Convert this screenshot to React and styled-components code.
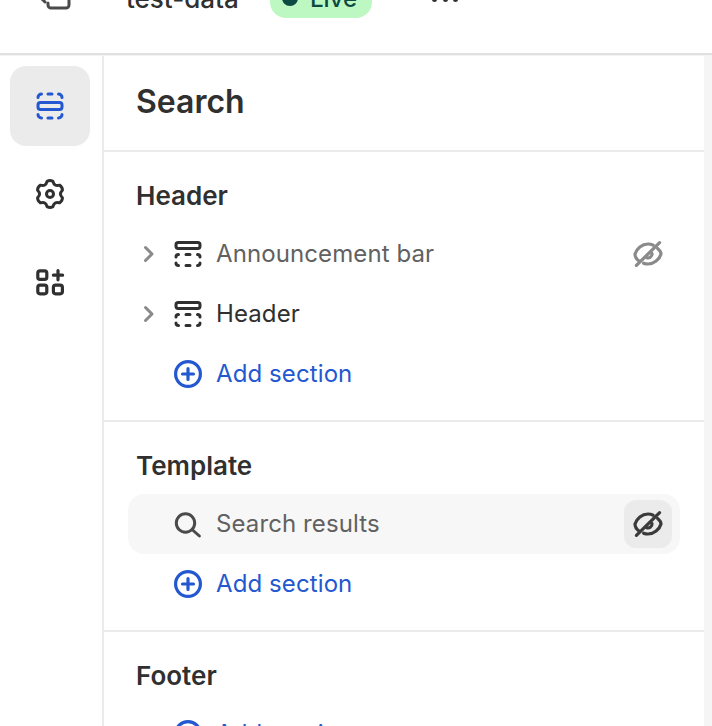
import React from "react";
import styled, { createGlobalStyle } from "styled-components";

const Global = createGlobalStyle`
  html, body { margin: 0; padding: 0; background: #fff; }
  body { font-family: Inter, "Liberation Sans", sans-serif; color: #303030; overflow: hidden; }
  * { box-sizing: border-box; }
`;

const Page = styled.div`
  width: 712px;
  height: 726px;
  overflow: hidden;
  display: flex;
  flex-direction: column;
  background: #fff;
`;

const TopBar = styled.header`
  flex: none;
  height: 55px;
  margin-bottom: 1px;
  display: flex;
  align-items: flex-start;
  overflow: hidden;
  border-bottom: 2px solid #e0e0e0;
  box-shadow: 0 1px 0 #f3f3f3;
  background: #fff;
`;

const TopInner = styled.div`
  display: flex;
  align-items: center;
  height: 40px;
  margin-top: -22px;
  padding-left: 38px;
`;

const ProjectName = styled.span`
  margin-left: 52px;
  width: 112px;
  font-size: 26px;
  font-weight: 450;
  white-space: nowrap;
  color: #303030;
`;

const LiveBadge = styled.span`
  margin-left: 32px;
  height: 40px;
  width: 102px;
  padding: 0 0 0 12px;
  display: flex;
  align-items: center;
  gap: 12px;
  border-radius: 16px;
  background: #bdf8c2;
  color: #0c4a42;
  font-size: 24px;
  font-weight: 450;
`;

const LiveDot = styled.i`
  flex: none;
  width: 16px;
  height: 16px;
  border-radius: 50%;
  background: #0c4a42;
`;

const MoreDots = styled.span`
  margin-left: 60px;
  margin-top: 2px;
  display: flex;
  gap: 5.5px;
`;

const MoreDot = styled.i`
  width: 5px;
  height: 5px;
  border-radius: 50%;
  background: #303030;
`;

const Body = styled.div`
  flex: 1;
  min-height: 0;
  display: flex;
`;

const Rail = styled.nav`
  flex: none;
  width: 104px;
  padding: 10px 12px 0 10px;
  display: flex;
  flex-direction: column;
  gap: 8px;
  border-right: 2px solid #ebebeb;
`;

const RailButton = styled.button`
  width: 80px;
  height: 80px;
  padding: 0;
  border: 0;
  border-radius: 16px;
  display: flex;
  align-items: center;
  justify-content: center;
  background: ${(p) => (p.$active ? "#ebebeb" : "transparent")};
  color: ${(p) => (p.$active ? "#2358d1" : "#303030")};
`;

const Panel = styled.main`
  flex: none;
  width: 600px;
  min-height: 0;
  overflow: hidden;
`;

const Gutter = styled.div`
  flex: 1;
  background: #f5f5f5;
`;

const TitleBlock = styled.div`
  height: 96px;
  padding: 0 32px;
  display: flex;
  align-items: flex-start;
  border-bottom: 2px solid #ebebeb;
`;

const Title = styled.h1`
  margin: 0;
  font-size: 32px;
  font-weight: 600;
  color: #303030;
  line-height: 91px;
`;

const Section = styled.section`
  padding: 20px 24px 16px;
  border-bottom: 2px solid #ebebeb;
`;

const SectionTitle = styled.h2`
  margin: 0 0 4px 8px;
  height: 48px;
  line-height: 48px;
  font-size: 26px;
  font-weight: 600;
  color: #303030;
`;

const Row = styled.div`
  height: 60px;
  width: 552px;
  display: flex;
  align-items: center;
  border-radius: 16px;
  background: ${(p) => (p.$selected ? "#f7f7f7" : "transparent")};
`;

const Chevron = styled.span`
  flex: none;
  width: 40px;
  display: flex;
  justify-content: center;
  color: #8a8a8a;
`;

const RowIcon = styled.span`
  flex: none;
  width: 40px;
  height: 40px;
  margin-left: ${(p) => (p.$indent ? "40px" : "0")};
  display: flex;
  color: ${(p) => p.$color || "#303030"};
`;

const RowLabel = styled.span`
  flex: 1;
  margin-left: 8px;
  padding-bottom: 2px;
  font-size: 24px;
  font-weight: 400;
  letter-spacing: 0.1px;
  color: ${(p) => (p.$muted ? "#616161" : p.$link ? "#2358d1" : "#303030")};
`;

const EyeButton = styled.span`
  flex: none;
  width: 48px;
  height: 48px;
  margin-right: 8px;
  border-radius: 12px;
  display: flex;
  align-items: center;
  justify-content: center;
  background: ${(p) => (p.$active ? "#ebebeb" : "transparent")};
  color: ${(p) => (p.$active ? "#3a3a3a" : "#8a8a8a")};
`;

const Svg = ({ children, sw = 1.5 }) => (
  <svg width="40" height="40" viewBox="0 0 20 20" fill="none" stroke="currentColor" strokeWidth={sw} strokeLinecap="round" strokeLinejoin="round">
    {children}
  </svg>
);

const LayoutIcon = () => (
  <Svg>
    <rect x="4" y="8.25" width="12" height="3.5" rx="1.25" />
    <path d="M4 5.75A1.75 1.75 0 0 1 5.75 4M16 5.75A1.75 1.75 0 0 0 14.25 4M9 4h2" />
    <path d="M4 14.25A1.75 1.75 0 0 0 5.75 16M16 14.25A1.75 1.75 0 0 1 14.25 16M9 16h2" />
  </Svg>
);

const polar = (deg, r) => {
  const a = (deg * Math.PI) / 180;
  return `${(10 + r * Math.cos(a)).toFixed(2)} ${(10 + r * Math.sin(a)).toFixed(2)}`;
};

const gearPath = () => {
  let d = `M${polar(-120, 5.2)}`;
  for (let i = 0; i < 6; i += 1) {
    const t = -90 + i * 60;
    d += `Q${polar(t - 20, 5.3)} ${polar(t - 13, 6.5)}`;
    d += `Q${polar(t, 7.15)} ${polar(t + 13, 6.5)}`;
    d += `Q${polar(t + 20, 5.3)} ${polar(t + 30, 5.2)}`;
  }
  return `${d}Z`;
};

const GearIcon = () => (
  <Svg>
    <circle cx="10" cy="10" r="1.75" />
    <path d={gearPath()} />
  </Svg>
);

const AppsIcon = () => (
  <Svg sw={1.6}>
    <rect x="3.9" y="4.4" width="4.5" height="4.3" rx="1.1" />
    <rect x="3.9" y="11.6" width="4.5" height="4.3" rx="1.1" />
    <rect x="11.7" y="11.6" width="4.5" height="4.3" rx="1.1" />
    <path d="M14 4.3v4.6M11.7 6.6h4.6" />
  </Svg>
);

const ChevronIcon = () => (
  <Svg>
    <path d="M8.75 6.75l3.25 3.25-3.25 3.25" />
  </Svg>
);

const HeaderBlockIcon = () => (
  <Svg>
    <rect x="4" y="4.25" width="12" height="3" rx="1.1" />
    <path d="M4 11.5A1.25 1.25 0 0 1 5.25 10.25M16 11.5A1.25 1.25 0 0 0 14.75 10.25M9 10.25h2" />
    <path d="M4 14.5A1.25 1.25 0 0 0 5.25 15.75M16 14.5A1.25 1.25 0 0 1 14.75 15.75M9 15.75h2" />
  </Svg>
);

const PlusCircleIcon = () => (
  <Svg sw={1.6}>
    <circle cx="10" cy="10" r="6.2" />
    <path d="M10 7.25v5.5M7.25 10h5.5" />
  </Svg>
);

const SearchIcon = () => (
  <Svg>
    <circle cx="8.75" cy="9.5" r="4.6" />
    <path d="M12.3 13l3.4 3" />
  </Svg>
);

const EyeOffIcon = () => (
  <Svg sw={1.6}>
    <path d="M5.5 13.5C4.2 12.6 3.5 11.2 3.5 10C4.3 7.2 7 5 10 5C11 5 11.8 5.2 12.6 5.6" />
    <path d="M14.8 7.2C15.8 8 16.5 9 16.5 10C15.7 12.8 13 15 10 15C9.2 15 8.5 14.9 7.8 14.6" />
    <path d="M12 9.8A2 2 0 0 1 9.2 11.8" />
    <path d="M4.2 15.7L15.8 4.3" />
  </Svg>
);

const AddRow = () => (
  <Row>
    <RowIcon $indent $color="#2358d1"><PlusCircleIcon /></RowIcon>
    <RowLabel $link>Add section</RowLabel>
  </Row>
);

export default function App() {
  return (
    <Page>
      <Global />
      <TopBar>
        <TopInner>
          <svg width="36" height="40" viewBox="0 0 18 20" fill="none" stroke="#4a4a4a" strokeWidth="1.5" strokeLinecap="round">
            <path d="M2 10.5l1.5 1.5M5 12.5v1a1.5 1.5 0 0 0 1.5 1.5h7.5a1.5 1.5 0 0 0 1.5-1.5V7" />
          </svg>
          <ProjectName>test-data</ProjectName>
          <LiveBadge><LiveDot />Live</LiveBadge>
          <MoreDots><MoreDot /><MoreDot /><MoreDot /></MoreDots>
        </TopInner>
      </TopBar>
      <Body>
        <Rail>
          <RailButton $active><LayoutIcon /></RailButton>
          <RailButton><GearIcon /></RailButton>
          <RailButton><AppsIcon /></RailButton>
        </Rail>
        <Panel>
          <TitleBlock><Title>Search</Title></TitleBlock>
          <Section>
            <SectionTitle>Header</SectionTitle>
            <Row>
              <Chevron><ChevronIcon /></Chevron>
              <RowIcon><HeaderBlockIcon /></RowIcon>
              <RowLabel $muted>Announcement bar</RowLabel>
              <EyeButton><EyeOffIcon /></EyeButton>
            </Row>
            <Row>
              <Chevron><ChevronIcon /></Chevron>
              <RowIcon><HeaderBlockIcon /></RowIcon>
              <RowLabel>Header</RowLabel>
            </Row>
            <AddRow />
          </Section>
          <Section>
            <SectionTitle>Template</SectionTitle>
            <Row $selected>
              <RowIcon $indent $color="#4a4a4a"><SearchIcon /></RowIcon>
              <RowLabel $muted>Search results</RowLabel>
              <EyeButton $active><EyeOffIcon /></EyeButton>
            </Row>
            <AddRow />
          </Section>
          <Section>
            <SectionTitle>Footer</SectionTitle>
            <AddRow />
          </Section>
        </Panel>
        <Gutter />
      </Body>
    </Page>
  );
}
